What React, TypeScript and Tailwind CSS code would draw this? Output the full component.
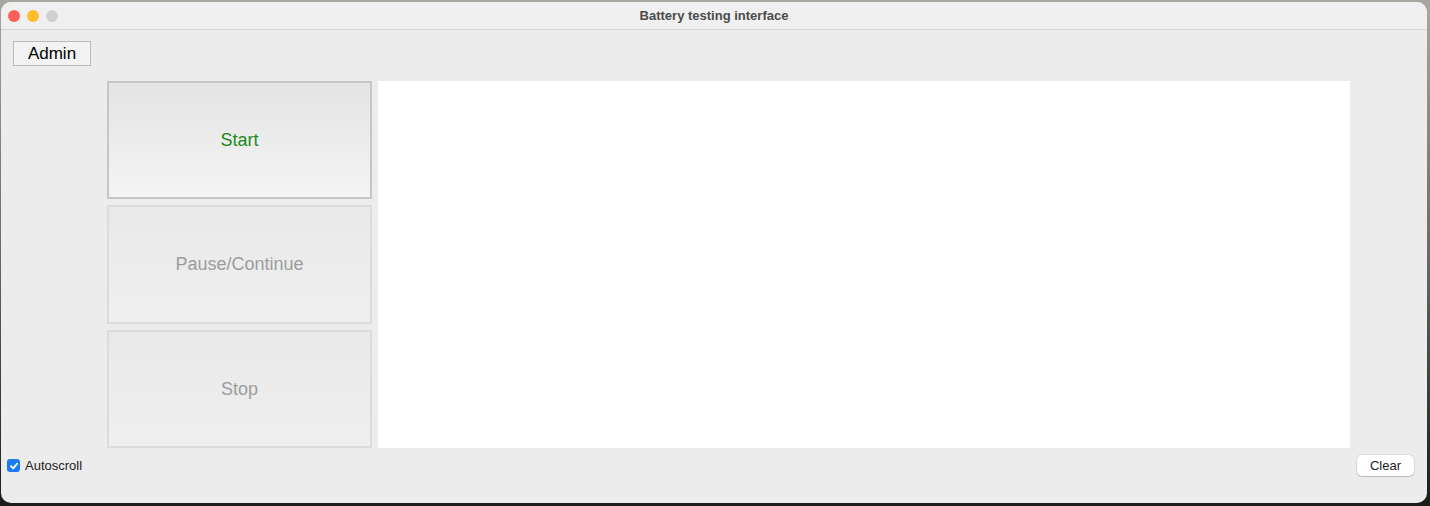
import React from "react";

export default function App() {
  return (
    <div className="w-[1430px] h-[506px] bg-gradient-to-b from-[#a9a7a2] via-[#6b6a68] to-[#1c1c1a] pl-[1px] pt-[2px] pr-[3px] pb-[3px] flex" style={{ fontFamily: '"Liberation Sans", Arial, sans-serif' }}>
      <div className="flex-1 flex flex-col bg-[#ececec] rounded-[10px] overflow-hidden">
        {/* title bar */}
        <div className="h-[28px] shrink-0 bg-[#f0f0f0] border-b border-[#d6d6d6] flex items-center relative">
          <div className="flex items-center gap-[7px] pl-[7px]">
            <span className="w-[12px] h-[12px] rounded-full bg-[#fe5f57]" />
            <span className="w-[12px] h-[12px] rounded-full bg-[#febc2e]" />
            <span className="w-[12px] h-[12px] rounded-full bg-[#d0d0d0]" />
          </div>
          <div className="absolute inset-0 flex items-center justify-center text-[13px] font-bold text-[#4b4b4b]">
            Battery testing interface
          </div>
        </div>
        {/* content */}
        <div className="flex-1 flex flex-col pt-[11px]">
          <div className="pl-[12px]">
            <button className="w-[78px] h-[25px] border border-[#b9b9b9] bg-[#f3f3f3] text-[17px] text-black leading-none flex items-center justify-center">
              Admin
            </button>
          </div>
          <div className="flex mt-[15px] pl-[106px] gap-[6px]">
            <div className="flex flex-col gap-[6px] w-[265px]">
              <button className="h-[118px] border-2 border-[#c6c6c6] bg-gradient-to-b from-[#e4e4e4] to-[#f4f4f4] text-[18px] text-[#198a19]">
                Start
              </button>
              <button className="h-[119px] border-2 border-[#dcdcdc] bg-gradient-to-b from-[#e9e9e9] to-[#efefef] text-[18px] text-[#9c9c9c]">
                Pause/Continue
              </button>
              <button className="h-[118px] border-2 border-[#dcdcdc] bg-gradient-to-b from-[#e9e9e9] to-[#efefef] text-[18px] text-[#9c9c9c]">
                Stop
              </button>
            </div>
            <div className="w-[972px] h-[367px] bg-white" />
          </div>
          <div className="flex items-center justify-between mt-[7px] pl-[6px] pr-[13px]">
            <label className="flex items-center gap-[5px] text-[13px] text-[#222] mt-[0px]">
              <span className="w-[13px] h-[13px] rounded-[3px] bg-[#1e7cf2] flex items-center justify-center">
                <svg width="10" height="10" viewBox="0 0 10 10">
                  <path d="M2 5.2 L4.2 7.4 L8.2 2.6" stroke="white" strokeWidth="1.8" fill="none" strokeLinecap="round" strokeLinejoin="round" />
                </svg>
              </span>
              Autoscroll
            </label>
            <button className="w-[57px] h-[21px] rounded-[5px] bg-white text-[13px] text-[#222] shadow-[0_0_0_0.5px_rgba(0,0,0,0.15),0_1px_1px_rgba(0,0,0,0.15)] flex items-center justify-center">
              Clear
            </button>
          </div>
        </div>
      </div>
    </div>
  );
}
